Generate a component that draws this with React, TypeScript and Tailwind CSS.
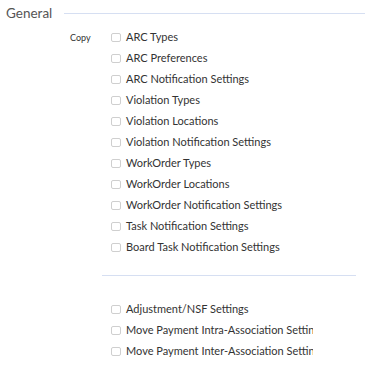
import React from "react";

const group1 = [
  "ARC Types",
  "ARC Preferences",
  "ARC Notification Settings",
  "Violation Types",
  "Violation Locations",
  "Violation Notification Settings",
  "WorkOrder Types",
  "WorkOrder Locations",
  "WorkOrder Notification Settings",
  "Task Notification Settings",
  "Board Task Notification Settings",
];

const group2 = [
  "Adjustment/NSF Settings",
  "Move Payment Intra-Association Settings",
  "Move Payment Inter-Association Settings",
];

function Item({ label }: { label: string }) {
  return (
    <div className="flex h-[21px] w-[204px] items-center overflow-hidden whitespace-nowrap">
      <span className="ml-[2px] mr-[5px] box-border h-[9px] w-[10px] shrink-0 rounded-[2px] border border-[#cfcfcf] bg-white" />
      <span className="text-[11px] text-[#333]">{label}</span>
    </div>
  );
}

export default function App() {
  return (
    <div
      className="h-[371px] w-[365px] bg-white"
      style={{ fontFamily: "Lato, 'Noto Sans', sans-serif" }}
    >
      <div className="flex items-center pl-[6px] pt-[4px]">
        <span className="text-[13.5px] leading-[18px] text-[#555]">General</span>
        <div className="ml-[12px] h-px flex-1 bg-[#d6dff2]" />
      </div>
      <div className="mt-[5px] flex">
        <div className="w-[109px] pl-[70px] pt-[6px] text-[9px] leading-[10px] text-[#333]">Copy</div>
        <div className="flex flex-col">
          {group1.map((l) => (
            <Item key={l} label={l} />
          ))}
          <div className="my-[17px] -ml-[7px] h-px w-[254px] bg-[#d6dff2]" />
          <div className="mt-[6px] flex flex-col">
            {group2.map((l) => (
              <Item key={l} label={l} />
            ))}
          </div>
        </div>
      </div>
    </div>
  );
}
